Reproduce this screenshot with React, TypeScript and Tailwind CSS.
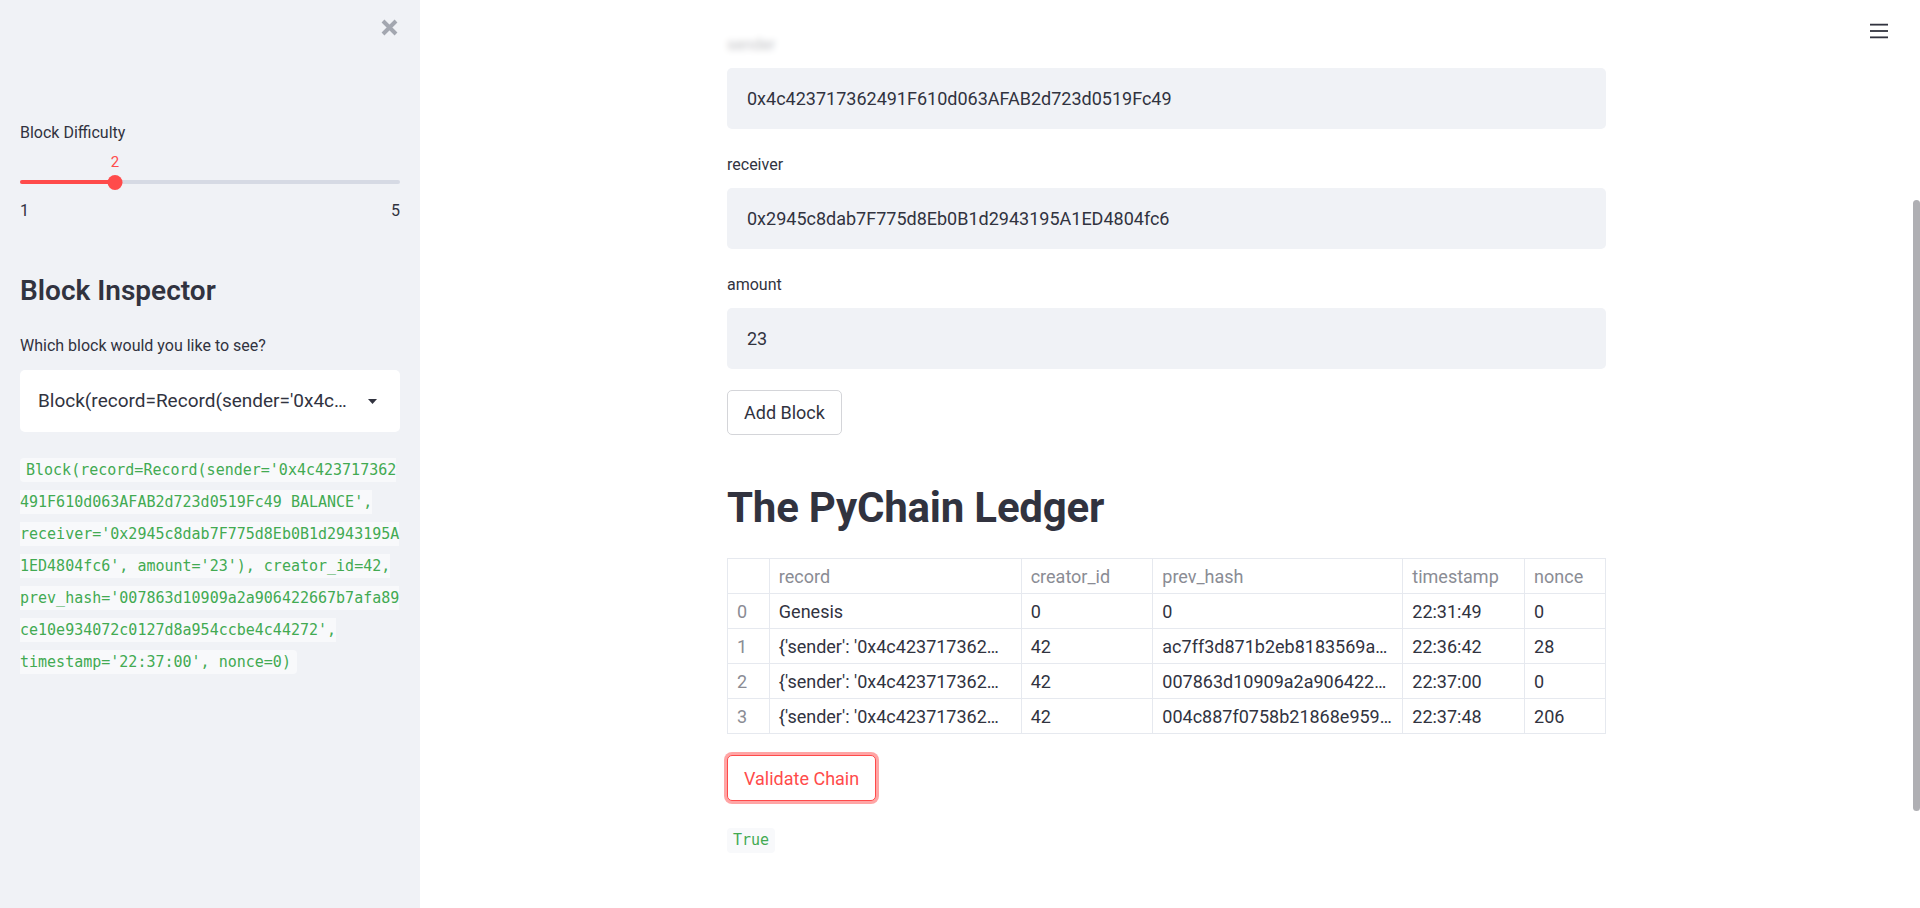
import React from "react";

const codeLines = [
  "Block(record=Record(sender='0x4c423717362",
  "491F610d063AFAB2d723d0519Fc49 BALANCE',",
  "receiver='0x2945c8dab7F775d8Eb0B1d2943195A",
  "1ED4804fc6', amount='23'), creator_id=42,",
  "prev_hash='007863d10909a2a906422667b7afa89",
  "ce10e934072c0127d8a954ccbe4c44272',",
  "timestamp='22:37:00', nonce=0)",
];

const rows = [
  ["0", "Genesis", "0", "0", "22:31:49", "0"],
  ["1", "{'sender': '0x4c423717362…", "42", "ac7ff3d871b2eb8183569a…", "22:36:42", "28"],
  ["2", "{'sender': '0x4c423717362…", "42", "007863d10909a2a906422…", "22:37:00", "0"],
  ["3", "{'sender': '0x4c423717362…", "42", "004c887f0758b21868e959…", "22:37:48", "206"],
];

const headers = ["", "record", "creator_id", "prev_hash", "timestamp", "nonce"];
const colWidths = [42, 252, 132, 250, 122, 81];

function Field({ label, value, first }: { label: string; value: string; first?: boolean }) {
  return (
    <div className={first ? "" : "mt-[22px]"}>
      <div className="h-[28px] flex items-center text-[16px] text-[#31333f]">{label}</div>
      <div className="mt-[9px] h-[61px] rounded-[5px] bg-[#f0f2f6] flex items-center pl-[20px] text-[18px] text-[#31333f]">
        {value}
      </div>
    </div>
  );
}

export default function App() {
  return (
    <div className="relative flex h-[908px] w-full overflow-hidden bg-white [font-family:Roboto,sans-serif] text-[#31333f]">
      {/* Sidebar */}
      <aside className="w-[420px] shrink-0 h-full bg-[#f0f2f6] px-5">
        <div className="h-[54px] flex items-center justify-end pr-[2px]">
          <svg width="17" height="17" viewBox="0 0 17 17">
            <path d="M2 2 L15 15 M15 2 L2 15" stroke="#a3a7b0" strokeWidth="4" strokeLinecap="butt" />
          </svg>
        </div>
        <div className="mt-[65px] h-[28px] flex items-center text-[16px]">Block Difficulty</div>
        <div className="relative h-[30px]">
          <span className="absolute left-[25%] top-0 h-[30px] leading-[30px] -translate-x-1/2 text-[15px] text-[#ff4b4b]">
            2
          </span>
        </div>
        <div className="relative h-[10px]">
          <div className="absolute left-0 right-0 top-[3px] h-[4px] rounded-full bg-[#d6dae4]" />
          <div className="absolute left-0 w-[25%] top-[3px] h-[4px] rounded-full bg-[#ff4b4b]" />
          <div className="absolute left-[25%] top-[-2.5px] w-[15px] h-[15px] -translate-x-1/2 rounded-full bg-[#ff4b4b]" />
        </div>
        <div className="mt-[14px] h-[20px] flex items-center justify-between text-[16px]">
          <span>1</span>
          <span>5</span>
        </div>
        <h2 className="mt-[52px] h-[36px] leading-[36px] text-[28px] font-semibold text-[#31333f]">Block Inspector</h2>
        <div className="mt-[23px] h-[28px] flex items-center text-[16px]">Which block would you like to see?</div>
        <div className="mt-[10px] h-[62px] rounded-[5px] bg-white flex items-center justify-between pl-[18px] pr-[23px] text-[19px]">
          <span className="whitespace-nowrap">Block(record=Record(sender='0x4c…</span>
          <svg width="9" height="5" viewBox="0 0 9 5">
            <polygon points="0,0 9,0 4.5,5" fill="#31333f" />
          </svg>
        </div>
        <div className="mt-[26px] flex flex-col items-start gap-[8px] [font-family:'DejaVu_Sans_Mono',monospace] text-[15px] text-[#42aa52]">
          {codeLines.map((l, i) => (
            <div
              key={i}
              className={
                "h-[24px] leading-[24px] whitespace-pre bg-[#f8f9fb] " +
                (i === 0 ? "pl-[6px] rounded-l-[4px] " : "") +
                (i === codeLines.length - 1 ? "pr-[6px] rounded-r-[4px]" : "")
              }
            >
              {l}
            </div>
          ))}
        </div>
      </aside>

      {/* Main */}
      <main className="relative flex-1 h-full">
        <div className="mx-auto w-[879px] pt-[31px]">
          <Field label="sender" value="0x4c423717362491F610d063AFAB2d723d0519Fc49" first />
          <Field label="receiver" value="0x2945c8dab7F775d8Eb0B1d2943195A1ED4804fc6" />
          <Field label="amount" value="23" />
          <button className="mt-[21px] h-[45px] px-[16px] rounded-[5px] border border-[#d4d5d9] bg-white text-[18px] text-[#31333f]">
            Add Block
          </button>
          <h1 className="mt-[47px] h-[52px] leading-[52px] text-[42px] font-bold text-[#31333f] tracking-[-0.2px]">
            The PyChain Ledger
          </h1>
          <table className="mt-[24px] table-fixed border-collapse text-[18px]">
            <colgroup>
              {colWidths.map((w, i) => (
                <col key={i} style={{ width: w }} />
              ))}
            </colgroup>
            <thead>
              <tr className="h-[35px]">
                {headers.map((h, i) => (
                  <th key={i} className="border border-[#e6e9ef] px-[9px] text-left font-normal text-[#8a8c94] whitespace-nowrap overflow-hidden">
                    {h}
                  </th>
                ))}
              </tr>
            </thead>
            <tbody>
              {rows.map((r, ri) => (
                <tr key={ri} className="h-[35px]">
                  {r.map((c, ci) => (
                    <td
                      key={ci}
                      className={
                        "border border-[#e6e9ef] px-[9px] whitespace-nowrap overflow-hidden " +
                        (ci === 0 ? "text-[#8a8c94]" : "text-[#31333f]")
                      }
                    >
                      {c}
                    </td>
                  ))}
                </tr>
              ))}
            </tbody>
          </table>
          <button className="mt-[21px] h-[46px] px-[16px] rounded-[5px] border border-[#ff4b4b] bg-white text-[18px] text-[#ff4b4b] ring-[3px] ring-[#ff4b4b]/50">
            Validate Chain
          </button>
          <div className="mt-[27px]">
            <span className="inline-block h-[25px] leading-[25px] px-[6px] rounded-[4px] bg-[#f8f9fb] [font-family:'DejaVu_Sans_Mono',monospace] text-[15px] text-[#42aa52]">
              True
            </span>
          </div>
        </div>

        {/* Header overlay */}
        <div className="absolute left-0 right-0 top-0 h-[58px] bg-white/70 backdrop-blur-[3px]">
          <svg className="absolute right-[25px] top-[23px]" width="18" height="16" viewBox="0 0 18 16">
            <rect x="0" y="0.75" width="18" height="1.8" fill="#31333f" />
            <rect x="0" y="7.1" width="18" height="1.8" fill="#31333f" />
            <rect x="0" y="13.45" width="18" height="1.8" fill="#31333f" />
          </svg>
        </div>
      </main>

      {/* Scrollbar */}
      <div className="w-[7px] shrink-0 h-full">
        <div className="mt-[200px] h-[611px] w-[7px] rounded-full bg-[#afafb3]" />
      </div>
    </div>
  );
}
